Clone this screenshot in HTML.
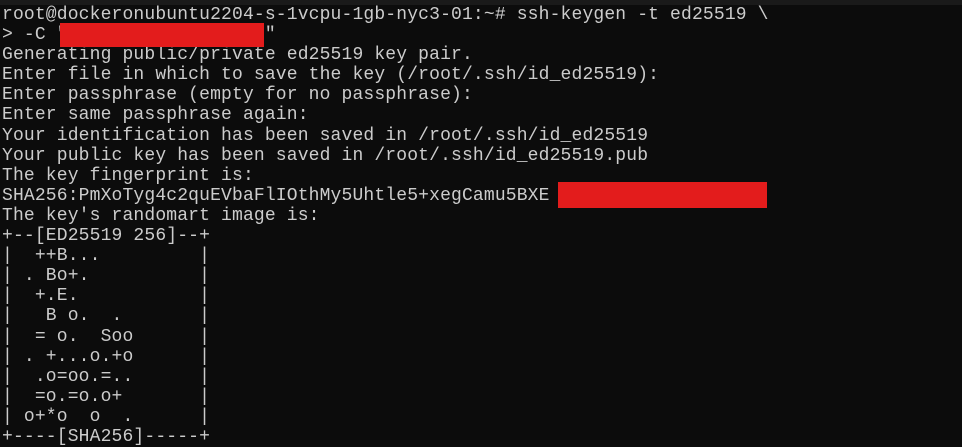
<!DOCTYPE html>
<html><head><style>
html,body{margin:0;padding:0;background:#0c0c0c;width:962px;height:445px;overflow:hidden}
.top{position:absolute;left:0;top:0;width:962px;height:5px;background:#1a1a1a}
pre{position:absolute;left:2px;top:5px;margin:0;font-family:"Liberation Mono",monospace;font-size:18px;line-height:20.1px;color:#cccccc;letter-spacing:0.15px}
.r{position:absolute;background:#e31c1c}
</style></head><body>
<div class="top"></div>
<pre>root@dockeronubuntu2204-s-1vcpu-1gb-nyc3-01:~# ssh-keygen -t ed25519 \
&gt; -C "                  "
Generating public/private ed25519 key pair.
Enter file in which to save the key (/root/.ssh/id_ed25519):
Enter passphrase (empty for no passphrase):
Enter same passphrase again:
Your identification has been saved in /root/.ssh/id_ed25519
Your public key has been saved in /root/.ssh/id_ed25519.pub
The key fingerprint is:
SHA256:PmXoTyg4c2quEVbaFlIOthMy5Uhtle5+xegCamu5BXE
The key's randomart image is:
+--[ED25519 256]--+
|  ++B...         |
| . Bo+.          |
|  +.E.           |
|   B o.  .       |
|  = o.  Soo      |
| . +...o.+o      |
|  .o=oo.=..      |
|  =o.=o.o+       |
| o+*o  o  .      |
+----[SHA256]-----+</pre>
<div class="r" style="left:60px;top:23px;width:204px;height:24px"></div>
<div class="r" style="left:558px;top:182px;width:209px;height:26px"></div>
</body></html>
